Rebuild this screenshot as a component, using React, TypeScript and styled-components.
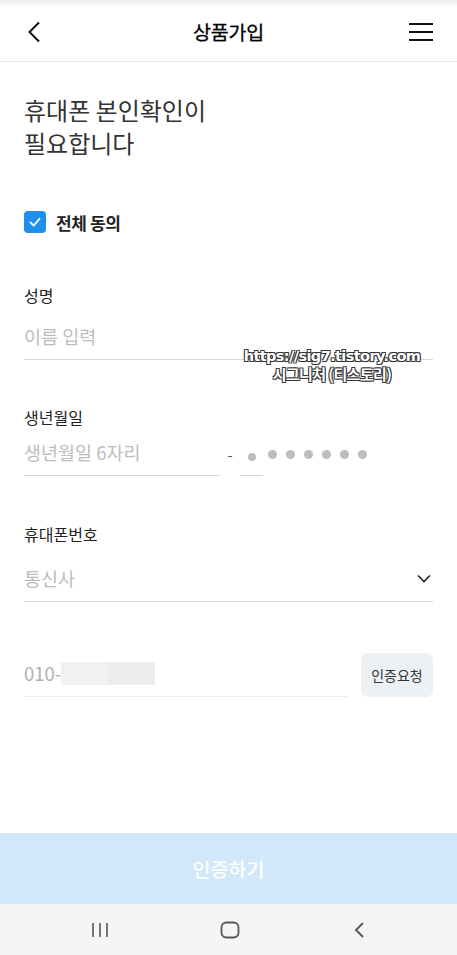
import React from 'react'
import styled, { createGlobalStyle } from 'styled-components'

const GlobalStyle = createGlobalStyle`
  html, body {
    margin: 0;
    padding: 0;
    background: #fff;
    font-family: "Noto Sans CJK KR", "Noto Sans", sans-serif;
  }
  * { box-sizing: border-box; }
`

const dots = [0, 1, 2, 3, 4, 5]

const App = () => {
  return (
    <Page>
      <GlobalStyle />
      <TopStrip />
      <Header>
        <IconButton>
          <svg width="14" height="22" viewBox="0 0 14 22">
            <polyline points="12,1.5 2.5,11 12,20.5" fill="none" stroke="#111" strokeWidth="2" />
          </svg>
        </IconButton>
        <Title>상품가입</Title>
        <IconButton>
          <svg width="26" height="20" viewBox="0 0 26 20">
            <line x1="1" y1="2" x2="25" y2="2" stroke="#111" strokeWidth="2" />
            <line x1="1" y1="10" x2="25" y2="10" stroke="#111" strokeWidth="2" />
            <line x1="1" y1="18" x2="25" y2="18" stroke="#111" strokeWidth="2" />
          </svg>
        </IconButton>
      </Header>

      <Content>
        <Heading>휴대폰 본인확인이<br />필요합니다</Heading>

        <AgreeRow>
          <CheckBox>
            <svg width="14" height="14" viewBox="0 0 14 14">
              <polyline points="2.5,7.5 5.8,10.5 11.5,3.8" fill="none" stroke="#fff" strokeWidth="1.8" strokeLinecap="round" strokeLinejoin="round" />
            </svg>
          </CheckBox>
          <AgreeLabel>전체 동의</AgreeLabel>
        </AgreeRow>

        <Field $top={51}>
          <Label>성명</Label>
          <InputLine $h={54}>
            <Placeholder>이름 입력</Placeholder>
          </InputLine>
          <Watermark>
            <span>https://sig7.tistory.com</span>
            <span>시그니처 (티스토리)</span>
          </Watermark>
        </Field>

        <Field $top={46}>
          <Label>생년월일</Label>
          <BirthRow>
            <InputLine $h={48} $w={196}>
              <Placeholder>생년월일 6자리</Placeholder>
            </InputLine>
            <Dash>-</Dash>
            <InputLine $h={48} $w={23}>
              <FirstDot />
            </InputLine>
            <Dots>
              {dots.map(d => <Dot key={d} />)}
            </Dots>
          </BirthRow>
        </Field>

        <Field $top={47}>
          <Label>휴대폰번호</Label>
          <InputLine $h={57}>
            <Placeholder>통신사</Placeholder>
            <Chevron>
              <svg width="14" height="9" viewBox="0 0 14 9">
                <polyline points="1,1.5 7,7.5 13,1.5" fill="none" stroke="#222" strokeWidth="1.6" />
              </svg>
            </Chevron>
          </InputLine>
        </Field>

        <PhoneRow>
          <InputLine $h={44} $light>
            <Placeholder $mid>010-</Placeholder>
            <Mask $c="#f1f1f1" />
            <Mask $c="#ececec" />
          </InputLine>
          <RequestButton>인증요청</RequestButton>
        </PhoneRow>
      </Content>

      <SubmitButton>인증하기</SubmitButton>
      <NavBar>
        <svg width="18" height="16" viewBox="0 0 18 16">
          <line x1="2" y1="1" x2="2" y2="15" stroke="#555" strokeWidth="1.6" />
          <line x1="9" y1="1" x2="9" y2="15" stroke="#555" strokeWidth="1.6" />
          <line x1="16" y1="1" x2="16" y2="15" stroke="#555" strokeWidth="1.6" />
        </svg>
        <svg width="20" height="18" viewBox="0 0 20 18">
          <rect x="1.5" y="1.5" width="17" height="15" rx="5" fill="none" stroke="#555" strokeWidth="1.8" />
        </svg>
        <svg width="14" height="18" viewBox="0 0 14 18">
          <polyline points="11,2 4,9 11,16" fill="none" stroke="#555" strokeWidth="1.8" />
        </svg>
      </NavBar>
    </Page>
  )
}

const Page = styled.div`
  min-height: 100vh;
  display: flex;
  flex-direction: column;
  background: #fff;
`

const TopStrip = styled.div`
  height: 6px;
  background: linear-gradient(#efefef, #fafafa);
`

const Header = styled.header`
  height: 56px;
  display: flex;
  align-items: center;
  justify-content: space-between;
  padding: 0 22px 4px 20px;
  border-bottom: 1px solid #e6e6e6;
`

const IconButton = styled.div`
  display: flex;
  align-items: center;
  justify-content: center;
  width: 28px;
  height: 28px;
`

const Title = styled.h1`
  margin: 0 0 0 2px;
  font-size: 19.5px;
  font-weight: 400;
  color: #000;
  letter-spacing: -0.2px;
  -webkit-text-stroke: 0.3px #000;
`

const Content = styled.main`
  flex: 1;
  padding: 31px 24px 0;
`

const Heading = styled.h2`
  margin: 0;
  font-size: 24px;
  line-height: 33px;
  font-weight: 400;
  color: #333;
`

const AgreeRow = styled.div`
  display: flex;
  align-items: center;
  gap: 10px;
  margin-top: 52px;
  height: 22px;
`

const CheckBox = styled.div`
  width: 22px;
  height: 22px;
  border-radius: 4px;
  background: #1e90ec;
  display: flex;
  align-items: center;
  justify-content: center;
`

const AgreeLabel = styled.span`
  font-size: 17px;
  font-weight: 700;
  color: #222;
  letter-spacing: -0.4px;
`

const Field = styled.section<{ $top: number }>`
  position: relative;
  margin-top: ${p => p.$top}px;
`

const Label = styled.div`
  font-size: 16px;
  line-height: 22px;
  color: #222;
`

const InputLine = styled.div<{ $h: number; $w?: number; $light?: boolean }>`
  display: flex;
  align-items: flex-end;
  height: ${p => p.$h}px;
  ${p => (p.$w ? `width: ${p.$w}px;` : 'flex: 1;')}
  padding-bottom: 10px;
  border-bottom: 1px solid ${p => (p.$light ? '#ececec' : '#d8d8d8')};
`

const Placeholder = styled.span<{ $mid?: boolean }>`
  flex: ${p => (p.$mid ? '0 0 auto' : '1')};
  font-size: 18.5px;
  line-height: 26px;
  color: ${p => (p.$mid ? '#b0b0b0' : '#bdbdbd')};
`

const BirthRow = styled.div`
  display: flex;
  align-items: flex-end;
`

const Dash = styled.span`
  width: 20px;
  text-align: center;
  font-size: 15px;
  color: #555;
  padding-bottom: 11px;
`

const FirstDot = styled.span`
  width: 8px;
  height: 8px;
  margin: 0 0 4px 8px;
  border-radius: 50%;
  background: #bdbdbd;
`

const Dots = styled.div`
  display: flex;
  gap: 9px;
  padding: 0 0 17px 5px;
`

const Dot = styled.span`
  width: 9px;
  height: 9px;
  border-radius: 50%;
  background: #bdbdbd;
`

const Chevron = styled.span`
  display: flex;
  padding: 0 2px 8px 0;
`

const PhoneRow = styled.div`
  display: flex;
  align-items: flex-end;
  gap: 13px;
  margin-top: 51px;
`

const Mask = styled.span<{ $c: string }>`
  width: 47px;
  height: 23px;
  margin-bottom: 1px;
  background: ${p => p.$c};
`

const RequestButton = styled.button`
  width: 72px;
  height: 44px;
  border: none;
  border-radius: 7px;
  background: #edf1f5;
  font-family: "Noto Sans CJK KR", sans-serif;
  font-size: 14px;
  color: #333;
  padding: 0;
`

const SubmitButton = styled.button`
  height: 71px;
  border: none;
  background: #d1e8fb;
  color: #fff;
  font-family: "Noto Sans CJK KR", sans-serif;
  font-size: 19.5px;
  font-weight: 500;
`

const NavBar = styled.nav`
  height: 51px;
  background: #f5f5f5;
  display: grid;
  grid-template-columns: 200px 59px 200px;
  align-items: center;
  justify-items: center;
  padding-right: 2px;
`

const Watermark = styled.div`
  position: absolute;
  left: 213px;
  top: 63px;
  width: 190px;
  display: flex;
  flex-direction: column;
  align-items: center;
  font-family: "DejaVu Sans", sans-serif;
  font-weight: 700;
  color: #fff;
  font-size: 14.5px;
  line-height: 18px;
  letter-spacing: -0.6px;
  text-shadow: -1px -1px 0 #333, 1px -1px 0 #333, -1px 1px 0 #333, 1px 1px 0 #333;
  & span:last-child {
    font-family: "Noto Sans CJK KR", sans-serif;
    font-size: 15px;
  }
`

export default App
